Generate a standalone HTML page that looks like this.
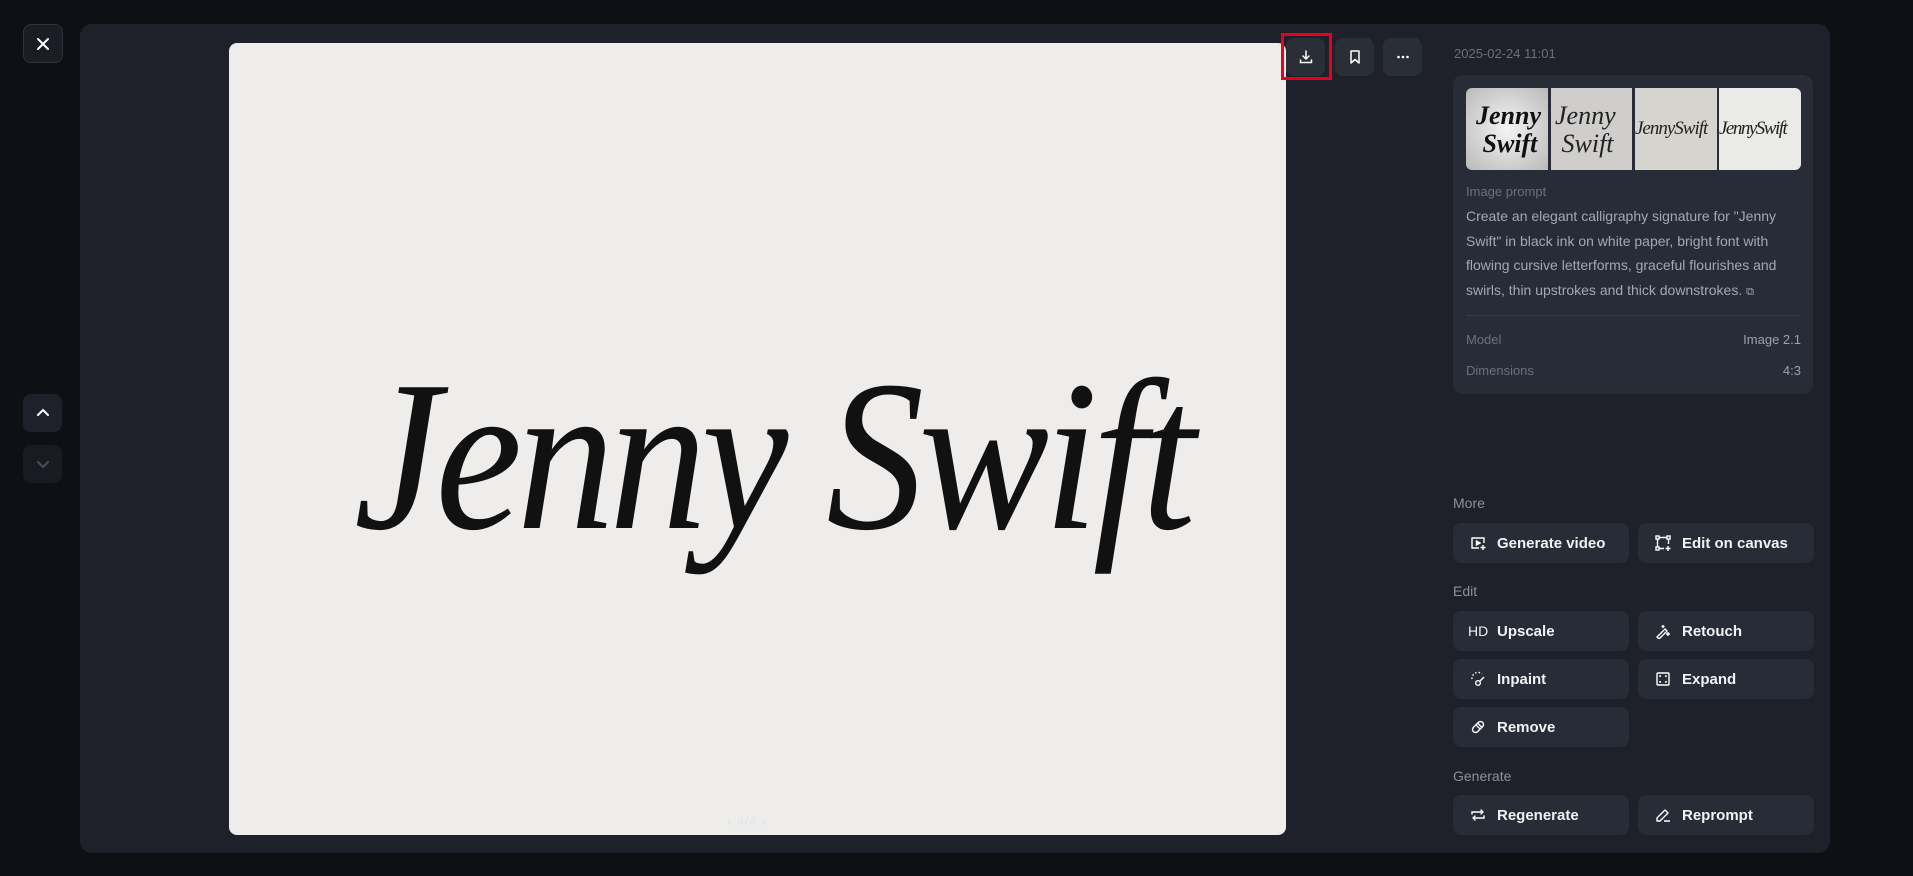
<!DOCTYPE html>
<html><head><meta charset="utf-8"><style>
*{box-sizing:border-box;margin:0;padding:0}
body{width:1913px;height:876px;background:#0d1015;font-family:"Liberation Sans",sans-serif;position:relative;overflow:hidden}
.abs{position:absolute}
.sq{position:absolute;border-radius:8px;background:#1e2129;display:flex;align-items:center;justify-content:center}
.panel{left:80px;top:24px;width:1750px;height:829px;background:#1e2129;border-radius:12px}
.img{left:229px;top:43px;width:1057px;height:792px;background:#eeedeb;border-radius:8px;overflow:hidden}
.tb{position:absolute;top:38px;width:39px;height:38px;border-radius:8px;background:#2a2e37;display:flex;align-items:center;justify-content:center}
.card{left:1453px;top:75px;width:360px;height:319px;background:#272c36;border-radius:10px}
.lbl{position:absolute;color:#8b909a;font-size:14px}
.btn{position:absolute;width:176px;height:40px;background:#272c36;border-radius:8px;color:#f1f2f4;font-size:15px;font-weight:bold;display:flex;align-items:center}
.btn svg{position:absolute;left:17px}
.btn span{position:absolute;left:44px}
</style></head><body>
<div class="sq" style="left:23px;top:24px;width:40px;height:39px;border:1px solid #2f333b;background:#1a1d23">
<svg width="16" height="16" viewBox="0 0 16 16"><path d="M3 3L13 13M13 3L3 13" stroke="#fff" stroke-width="2" stroke-linecap="round"/></svg></div>
<div class="sq" style="left:23px;top:394px;width:39px;height:38px"><svg width="16" height="16" viewBox="0 0 16 16"><path d="M3 10L8 5L13 10" stroke="#fff" stroke-width="2" fill="none" stroke-linecap="round"/></svg></div>
<div class="sq" style="left:23px;top:445px;width:39px;height:38px;background:#181b21"><svg width="16" height="16" viewBox="0 0 16 16"><path d="M3 6L8 11L13 6" stroke="#4a4e57" stroke-width="2" fill="none" stroke-linecap="round"/></svg></div>
<div class="abs panel"></div>
<div class="abs img">
<div class="abs" style="left:125px;top:305px;line-height:1;font-family:'Liberation Serif',serif;font-style:italic;font-size:215px;color:#111;letter-spacing:-6px;transform:scaleX(0.91);transform-origin:left;white-space:nowrap">Jenny Swift</div>
<div class="abs" style="left:498px;top:770px;color:#dfe7ec;font-size:15px">‹ 4/4 ›</div>
</div>
<div class="tb" style="left:1286px"><svg width="16" height="16" viewBox="0 0 16 16" fill="none" stroke="#fff" stroke-width="1.5" stroke-linecap="round"><path d="M8 2V10M5 7L8 10L11 7M2.5 11V13.5H13.5V11"/></svg></div>
<div class="abs" style="left:1281px;top:33px;width:51px;height:47px;border:3px solid #e8001c"></div>
<div class="tb" style="left:1335px"><svg width="16" height="16" viewBox="0 0 16 16" fill="none" stroke="#fff" stroke-width="1.5" stroke-linejoin="round"><path d="M4 2H12V14L8 10.5L4 14Z"/></svg></div>
<div class="tb" style="left:1383px"><svg width="16" height="16" viewBox="0 0 16 16" fill="#fff"><circle cx="3.5" cy="8" r="1.3"/><circle cx="8" cy="8" r="1.3"/><circle cx="12.5" cy="8" r="1.3"/></svg></div>
<div class="abs" style="left:1454px;top:46px;color:#6b707a;font-size:13px">2025-02-24 11:01</div>
<div class="abs card"></div>
<div class="abs" style="left:1466px;top:88px;width:82px;height:82px;border-radius:6px 0 0 6px;overflow:hidden;background:radial-gradient(#f4f4f4,#b9b9b9);font:italic bold 26px 'Liberation Serif',serif;color:#111;line-height:28px;padding:14px 0 0 10px">Jenny<br>&nbsp;Swift</div>
<div class="abs" style="left:1551px;top:88px;width:81px;height:82px;overflow:hidden;background:#cfcecc;font:italic 26px 'Liberation Serif',serif;color:#222;line-height:28px;padding:14px 0 0 4px">Jenny<br>&nbsp;Swift</div>
<div class="abs" style="left:1635px;top:88px;width:82px;height:82px;overflow:hidden;background:#d6d4cf;font:italic 19px 'Liberation Serif',serif;color:#222;padding-top:30px;letter-spacing:-1px">JennySwift</div>
<div class="abs" style="left:1719px;top:88px;width:82px;height:82px;overflow:hidden;border-radius:0 6px 6px 0;background:#eaeae8;font:italic 19px 'Liberation Serif',serif;color:#222;padding-top:30px;letter-spacing:-1.5px">JennySwift</div>
<div class="lbl" style="left:1466px;top:184px;font-size:13px;color:#6b707a">Image prompt</div>
<div class="abs" style="left:1466px;top:204px;width:340px;color:#a3a8b1;font-size:14px;line-height:24.5px">Create an elegant calligraphy signature for "Jenny Swift" in black ink on white paper, bright font with flowing cursive letterforms, graceful flourishes and swirls, thin upstrokes and thick downstrokes. <span style="font-size:11px">⧉</span></div>
<div class="abs" style="left:1466px;top:315px;width:335px;height:1px;background:#363b45"></div>
<div class="lbl" style="left:1466px;top:332px;font-size:13px;color:#6b707a">Model</div>
<div class="lbl" style="left:1700px;top:332px;width:101px;text-align:right;font-size:13px;color:#9ca1aa">Image 2.1</div>
<div class="lbl" style="left:1466px;top:363px;font-size:13px;color:#6b707a">Dimensions</div>
<div class="lbl" style="left:1700px;top:363px;width:101px;text-align:right;font-size:13px;color:#9ca1aa">4:3</div>
<div class="lbl" style="left:1453px;top:495px">More</div>
<div class="btn" style="left:1453px;top:523px"><svg width="16" height="16" viewBox="0 0 16 16" fill="none" stroke="#fff" stroke-width="1.4"><path d="M14 8V3H2V13H9"/><path d="M6.5 6L10 8L6.5 10Z" fill="#fff"/><path d="M13 10V15M10.5 12.5H15.5"/></svg><span>Generate video</span></div>
<div class="btn" style="left:1638px;top:523px"><svg width="16" height="16" viewBox="0 0 16 16" fill="none" stroke="#fff" stroke-width="1.4"><rect x="1" y="1" width="3" height="3"/><rect x="12" y="1" width="3" height="3"/><rect x="1" y="12" width="3" height="3"/><path d="M4 2.5H12M2.5 4V12M13.5 4V9M4 13.5H9M13 11V16M10.5 13.5H15.5"/></svg><span>Edit on canvas</span></div>
<div class="lbl" style="left:1453px;top:583px">Edit</div>
<div class="btn" style="left:1453px;top:611px"><span style="left:15px;font-weight:normal;font-size:14px">HD</span><span>Upscale</span></div>
<div class="btn" style="left:1638px;top:611px"><svg width="16" height="16" viewBox="0 0 16 16" fill="none" stroke="#fff" stroke-width="1.4"><path d="M2 14L10 6L12 8L4 16Z"/><path d="M8 2V5M6.5 3.5H9.5M13 9V13M11 11H15"/></svg><span>Retouch</span></div>
<div class="btn" style="left:1453px;top:659px"><svg width="16" height="16" viewBox="0 0 16 16" fill="none" stroke="#fff" stroke-width="1.4"><path d="M2 8A6 6 0 0 1 12 3" stroke-dasharray="1.5 2"/><circle cx="8" cy="12" r="2.3"/><path d="M10 10L14 6"/></svg><span>Inpaint</span></div>
<div class="btn" style="left:1638px;top:659px"><svg width="16" height="16" viewBox="0 0 16 16" fill="none" stroke="#fff" stroke-width="1.4"><rect x="2" y="2" width="12" height="12" rx="1"/><path d="M5 6V5H6M10 5H11V6M11 10V11H10M6 11H5V10"/></svg><span>Expand</span></div>
<div class="btn" style="left:1453px;top:707px"><svg width="16" height="16" viewBox="0 0 16 16" fill="none" stroke="#fff" stroke-width="1.4"><rect x="1.5" y="5" width="13" height="6" rx="3" transform="rotate(-45 8 8)"/><path d="M6 6L10 10M8 4.5L11.5 8"/></svg><span>Remove</span></div>
<div class="lbl" style="left:1453px;top:768px">Generate</div>
<div class="btn" style="left:1453px;top:795px"><svg width="16" height="16" viewBox="0 0 16 16" fill="none" stroke="#fff" stroke-width="1.4" stroke-linecap="round"><path d="M2 7V5H13M11 3L13 5L11 7M14 9V11H3M5 13L3 11L5 9"/></svg><span>Regenerate</span></div>
<div class="btn" style="left:1638px;top:795px"><svg width="16" height="16" viewBox="0 0 16 16" fill="none" stroke="#fff" stroke-width="1.4" stroke-linejoin="round"><path d="M2 14V11L10 3L13 6L5 14Z M9 14H15"/></svg><span>Reprompt</span></div>
</body></html>
